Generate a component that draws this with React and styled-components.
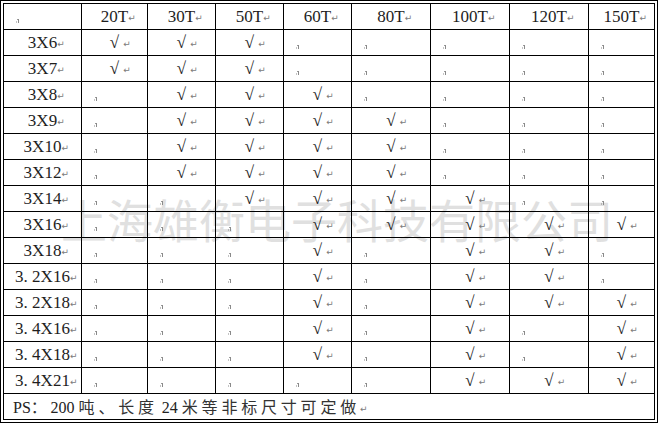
import React from "react";
import styled, { createGlobalStyle } from "styled-components";

const Global = createGlobalStyle`
  html, body { margin: 0; padding: 0; background: #fff; }
  #root { width: 658px; }
`;

const Frame = styled.div`
  position: relative;
  width: 658px;
  height: 423px;
  box-sizing: border-box;
  border: 4px double #000;
  background: #fff;
`;

const Watermark = styled.div`
  position: absolute;
  left: 57px;
  top: 191px;
  z-index: 0;
  font-family: "Noto Sans CJK SC", sans-serif;
  font-size: 46px;
  line-height: 1;
  color: #e0e0e0;
  white-space: nowrap;
  pointer-events: none;
`;

const Table = styled.table`
  position: relative;
  z-index: 1;
  width: 650px;
  table-layout: fixed;
  border-collapse: separate;
  border-spacing: 0;
  font-family: "Liberation Serif", "Noto Sans CJK SC", serif;
  color: #1e1e1e;
`;

const Cell = styled.td`
  height: 25px;
  padding: 0;
  box-sizing: content-box;
  border-right: ${(p) => (p.$lastCol ? "none" : "1px solid #000")};
  border-bottom: ${(p) => (p.$lastRow ? "none" : "1px solid #000")};
  text-align: ${(p) => (p.$empty ? "left" : "center")};
  vertical-align: ${(p) => (p.$empty ? "bottom" : "middle")};
  padding-left: ${(p) => (p.$empty ? "12px" : "0")};
  font-size: 17px;
  line-height: 20px;
  white-space: nowrap;
  background: transparent;
`;

const Label = styled.span`
  word-spacing: 0px;
`;

const Para = styled.span`
  display: inline-block;
  font-family: "DejaVu Sans", sans-serif;
  font-size: 9px;
  line-height: 1;
  color: #7a7a7a;
  margin-left: ${(p) => p.$gap}px;
  margin-right: ${(p) => -(p.$gap + 8)}px;
  width: 8px;
  text-align: left;
  vertical-align: 1px;
`;

const Check = styled.span`
  font-family: "Liberation Serif", "DejaVu Serif", serif;
  font-size: 17px;
`;

const MarkBox = styled.span`
  display: inline-block;
  line-height: 0;
  margin-bottom: 6px;
`;

const PsCell = styled.td`
  height: 25px;
  padding: 0 0 0 9px;
  text-align: left;
  vertical-align: middle;
  white-space: nowrap;
  font-size: 16px;
  line-height: 20px;
  color: #222;
`;

const Latin = styled.span`
  font-family: "Liberation Serif", serif;
  font-size: 16px;
`;

const Cjk = styled.span`
  font-family: "Noto Sans CJK SC", sans-serif;
  font-size: 16px;
  letter-spacing: 3.8px;
  color: #333;
`;

const Mark = () => (
  <MarkBox>
    <svg width="3" height="4" viewBox="0 0 3 4">
      <rect x="0" y="2.5" width="1" height="1" fill="#8a8a8a" />
      <rect x="1" y="0" width="1" height="1" fill="#9a9a9a" />
      <rect x="2" y="0" width="1" height="4" fill="#8a8a8a" />
    </svg>
  </MarkBox>
);

const widths = [78, 66, 68, 68, 68, 79, 79, 79, 65];
const heads = ["20T", "30T", "50T", "60T", "80T", "100T", "120T", "150T"];

const rows = [
  ["3X6", "11100000"],
  ["3X7", "11100000"],
  ["3X8", "01110000"],
  ["3X9", "01111000"],
  ["3X10", "01111000"],
  ["3X12", "01111000"],
  ["3X14", "00111100"],
  ["3X16", "00011111"],
  ["3X18", "00010110"],
  ["3. 2X16", "00010110"],
  ["3. 2X18", "00010111"],
  ["3. 4X16", "00010101"],
  ["3. 4X18", "00010101"],
  ["3. 4X21", "00000111"],
];

export default function App() {
  return (
    <>
      <Global />
      <Frame>
        <Watermark>上海雄衡电子科技有限公司</Watermark>
        <Table>
          <colgroup>
            {widths.map((w, i) => (
              <col key={i} style={{ width: w }} />
            ))}
          </colgroup>
          <tbody>
            <tr>
              <Cell $empty>
                <Mark />
              </Cell>
              {heads.map((h, i) => (
                <Cell key={h} $lastCol={i === heads.length - 1}>
                  {h}
                  <Para $gap={0}>↵</Para>
                </Cell>
              ))}
            </tr>
            {rows.map(([label, flags]) => (
              <tr key={label}>
                <Cell>
                  <Label>{label}</Label>
                  <Para $gap={0}>↵</Para>
                </Cell>
                {flags.split("").map((f, i) =>
                  f === "1" ? (
                    <Cell key={i} $lastCol={i === 7}>
                      <Check>√</Check>
                      <Para $gap={4}>↵</Para>
                    </Cell>
                  ) : (
                    <Cell key={i} $empty $lastCol={i === 7}>
                      <Mark />
                    </Cell>
                  )
                )}
              </tr>
            ))}
            <tr>
              <PsCell colSpan={9}>
                <Latin>PS</Latin>
                <Cjk>：</Cjk>
                <Latin>200 </Latin>
                <Cjk>吨、长度</Cjk>
                <Latin> 24 </Latin>
                <Cjk>米等非标尺寸可定做</Cjk>
                <Para $gap={0}>↵</Para>
              </PsCell>
            </tr>
          </tbody>
        </Table>
      </Frame>
    </>
  );
}
